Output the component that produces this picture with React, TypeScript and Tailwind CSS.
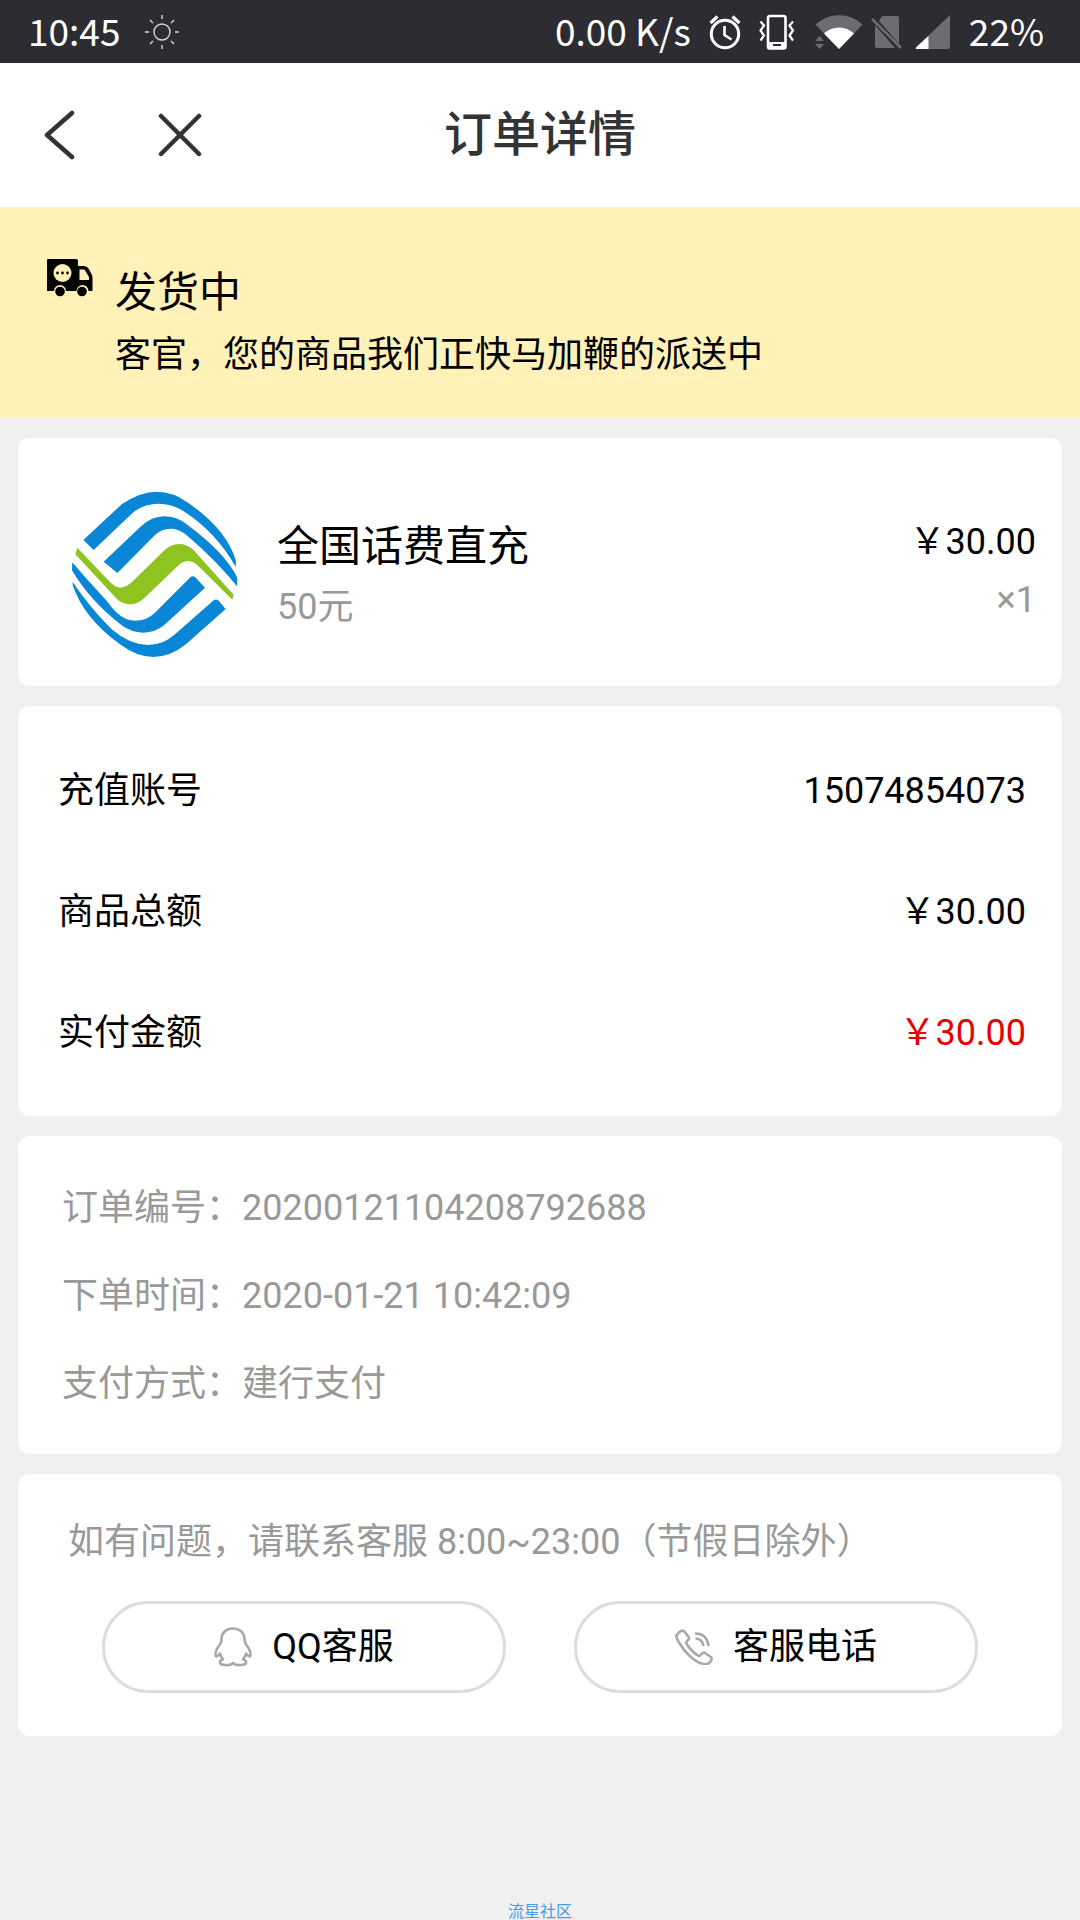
import type { ReactNode } from 'react';

const amounts = [
  { label: '充值账号', value: '15074854073', className: '' },
  { label: '商品总额', value: '￥30.00', className: '' },
  { label: '实付金额', value: '￥30.00', className: 'text-[#e60000]' },
];

const orderInfo = [
  { label: '订单编号', value: '20200121104208792688' },
  { label: '下单时间', value: '2020-01-21 10:42:09' },
  { label: '支付方式', value: '建行支付' },
];

function Card({ className, children }: { className: string; children: ReactNode }) {
  return <section className={`rounded-xl bg-white ${className}`}>{children}</section>;
}

function SunIcon() {
  return (
    <svg width="36" height="36" viewBox="0 0 36 36" fill="none" stroke="#d8d8da" strokeWidth="1.4">
      <circle cx="18" cy="18" r="8" />
      <path d="M18 1v4M18 31v4M1 18h4M31 18h4M6 6l3 3M27 27l3 3M6 30l3-3M27 9l3-3" />
    </svg>
  );
}

function AlarmIcon() {
  return (
    <svg width="32" height="36" viewBox="0 0 32 36" fill="none" stroke="#fff" strokeWidth="3">
      <circle cx="16" cy="20" r="13.7" />
      <path d="M15.5 12v9l7 4.500" strokeWidth="2.600" />
      <path d="M1.500 9l7-6.500M30.500 9l-7-6.500" strokeWidth="3.200" />
    </svg>
  );
}

function VibrateIcon() {
  return (
    <svg width="36" height="36" viewBox="0 0 36 36" fill="none" stroke="#fff">
      <rect x="9" y="2" width="17.500" height="32.500" rx="2" strokeWidth="2.600" />
      <path d="M9 28.500h17.500v6H9z" fill="#fff" strokeWidth="1" />
      <path d="M14 31h8" stroke="#2d2c32" strokeWidth="2" />
      <path d="M1.500 7.500l3.500 4-3.500 5 3.500 5-3.500 5M34 7.500l-3.500 4 3.500 5-3.500 5 3.500 5" strokeWidth="2.200" />
    </svg>
  );
}

function WifiIcon() {
  return (
    <svg width="48" height="36" viewBox="0 0 48 36">
      <path d="M24 35L0.500 10.500C14-2 34-2 47.500 10.500z" fill="#6d6c71" />
      <path d="M24 35L9 19.500c8-8 22-8 30 0z" fill="#fff" />
      <path d="M0 27l4.500-5 4.500 5zM0 30h9l-4.500 5z" fill="#6d6c71" />
    </svg>
  );
}

function NoSimIcon() {
  return (
    <svg width="32" height="36" viewBox="0 0 32 36">
      <path d="M11 2h15q2 0 2 2v26L8 7z" fill="#6d6c71" />
      <path d="M4 11l20 23H6q-2 0-2-2z" fill="#6d6c71" />
      <path d="M1 5l29 29" stroke="#6d6c71" strokeWidth="2.500" />
    </svg>
  );
}

function SignalIcon() {
  return (
    <svg width="36" height="36" viewBox="0 0 36 36">
      <path d="M35 1v32q0 2-2 2H2q-2 0-1-1.500z" fill="#6d6c71" />
      <path d="M13.500 22v13H2q-2 0-1-1.500z" fill="#fff" />
    </svg>
  );
}

function TruckIcon() {
  return (
    <svg width="46" height="38" viewBox="0 0 46 38">
      <path d="M1 0h28q2 0 2 2v5h6q3 0 4.500 2.500l3 5.500q1 2 1 4v13h-4a6 6 0 0 0-12 0H19a6 6 0 0 0-12 0H0V1q0-1 1-1z" fill="#050300" />
      <path d="M32.500 10.500h5l4.500 7.500v3h-9.500z" fill="#fff1b8" />
      <circle cx="15.500" cy="14" r="9" fill="#fff1b8" />
      <circle cx="10.500" cy="14" r="1.400" />
      <circle cx="15.500" cy="14" r="1.400" />
      <circle cx="20.500" cy="14" r="1.400" />
      <circle cx="13" cy="32.500" r="4.800" />
      <circle cx="35" cy="32.500" r="4.800" />
    </svg>
  );
}

function MobileLogo() {
  return (
    <svg width="168" height="168" viewBox="93 90 504 504" className="shrink-0" role="img" aria-label="中国移动">
      <g fill="#0a86d6">
        <path d="M130 237L245 130Q300 92 350 92Q400 92 445 126Q560 205 588 300L587 318Q530 215 430 150Q395 128 355 128Q310 128 275 158L161 267Z" />
        <path d="M191 302L303 196Q335 166 373 166Q410 166 440 190Q555 275 592 350L591 376Q530 300 437 220Q415 203 393 203Q365 203 345 222L232 336Z" />
        <path d="M97 304Q140 355 205 425Q240 477 285 479Q320 479 345 455L451 349Q458 342 466 349L495 380L372 493Q345 515 310 515Q275 515 245 493Q150 420 96 328Z" />
        <path d="M98 363Q150 440 215 505Q270 552 325 552Q370 552 405 520L521 418Q528 412 536 419L557 444L438 550Q390 588 340 588Q290 588 240 550Q130 470 98 372Z" />
      </g>
      <path d="M112 260Q150 300 213 366Q228 380 242 380Q260 378 275 364L371 270Q392 249 417 249Q440 249 460 266L581 401L577 416L478 318Q462 300 444 300Q426 301 411 317L309 415Q290 431 269 430Q245 428 230 413L106 280Z" fill="#8fc31f" />
    </svg>
  );
}

function QqIcon() {
  return (
    <svg width="38" height="40" viewBox="0 0 38 40" fill="none" stroke="#a8a8a8" strokeWidth="2.600" strokeLinejoin="round">
      <path d="M19 1.500C11 1.500 7.500 7 7.500 12Q7.500 15 6 17.500C3 21 1.500 25 1.500 28Q2 31.500 6 26.500Q6.500 30 9 32.500C4 33.500 5 38 11 38Q17 38.500 19 36Q21 38.500 27 38C33 38 34 33.500 29 32.500Q31.500 30 32 26.500Q36 31.500 36.500 28C36.500 25 35 21 32 17.500Q30.500 15 30.500 12C30.500 7 27 1.500 19 1.500Z" />
    </svg>
  );
}

function CallIcon() {
  return (
    <svg width="38" height="36" viewBox="0 0 38 36" fill="none" stroke="#a8a8a8" strokeWidth="2.600" strokeLinejoin="round">
      <path d="M28 35C19 33 9 22 5 15Q1 9 1.500 6.500Q4 2.500 7 1.500Q9 1.500 10.500 4L14 8.500Q14.500 10 12.500 11.500Q10.500 13 12 15.500Q17 23 23 26.500Q25 27.500 26.500 25Q28 23 30 24L36 28Q37.500 30 35.500 32.500Q33 36 28 35Z" />
      <path d="M20 4.500Q32 4.500 33.500 17M20.500 9.500Q27.500 10 28.500 17" />
    </svg>
  );
}

export default function App() {
  return (
    <div className="flex min-h-screen flex-col bg-[#f0f0f0] font-['Roboto','Noto_Sans_CJK_SC',sans-serif] text-4xl text-black">
      {/* Status bar */}
      <div className="flex h-[63px] items-center justify-between bg-[#2d2c32] pr-9 pl-7 font-['Noto_Sans_CJK_SC',sans-serif] text-[37px] text-white">
        <div className="flex items-center gap-6">
          <span className="pb-1 leading-[58px]">10:45</span>
          <SunIcon />
        </div>
        <div className="flex items-center">
          <span className="mr-[18px] pb-1 leading-[58px]">0.00 K/s</span>
          <span className="mr-[18px]"><AlarmIcon /></span>
          <span className="mr-5"><VibrateIcon /></span>
          <span className="mr-2"><WifiIcon /></span>
          <span className="mr-3"><NoSimIcon /></span>
          <span className="mr-[18px]"><SignalIcon /></span>
          <span className="pb-1 leading-[58px]">22%</span>
        </div>
      </div>

      {/* Nav bar */}
      <header className="grid h-36 grid-cols-[1fr_auto_1fr] items-center bg-white px-9">
        <div className="flex items-center gap-[74px] text-[#333]">
          <button type="button" aria-label="返回" className="p-2">
            <svg width="32" height="50" viewBox="0 0 32 50" fill="none" stroke="currentColor" strokeWidth="4.500" strokeLinecap="round" strokeLinejoin="round">
              <path d="M28 3L3 25l25 22" />
            </svg>
          </button>
          <button type="button" aria-label="关闭">
            <svg width="44" height="44" viewBox="0 0 44 44" fill="none" stroke="currentColor" strokeWidth="4.500" strokeLinecap="round">
              <path d="M3 3l38 38M41 3L3 41" />
            </svg>
          </button>
        </div>
        <h1 className="text-5xl font-medium text-[#333]">订单详情</h1>
      </header>

      {/* Shipping state */}
      <div className="flex gap-[22px] bg-[#fff1b8] pt-[52px] pr-6 pb-8 pl-[47px]">
        <TruckIcon />
        <div className="pt-0.5">
          <h2 className="text-[42px] leading-[64px]">发货中</h2>
          <p className="leading-[60px]">客官，您的商品我们正快马加鞭的派送中</p>
        </div>
      </div>

      <main className="flex flex-col gap-5 px-[18px] pt-[21px]">
        <Card className="flex items-center pt-[53px] pr-[26px] pb-[27px] pl-[53px]">
          <MobileLogo />
          <div className="ml-[38px] flex-1">
            <h3 className="text-[42px] leading-[64px]">全国话费直充</h3>
            <p className="leading-[56px] text-[#999]">50元</p>
          </div>
          <div className="pb-2 text-right">
            <p className="leading-[58px]">￥30.00</p>
            <p className="leading-[58px] text-[#999]">×1</p>
          </div>
        </Card>

        <Card className="pt-6 pr-9 pb-[23px] pl-10">
          {amounts.map(row => (
            <div key={row.label} className="flex h-[121px] items-center justify-between">
              <span>{row.label}</span>
              <span className={row.className}>{row.value}</span>
            </div>
          ))}
        </Card>

        <Card className="px-11 pt-7 pb-[26px] text-[#999]">
          {orderInfo.map(row => (
            <p key={row.label} className="leading-[88px]">{row.label}：{row.value}</p>
          ))}
        </Card>

        <Card className="px-[50px] pt-[38px] pb-[43px]">
          <p className="leading-[60px] text-[#999]">如有问题，请联系客服 8:00~23:00（节假日除外）</p>
          <div className="mt-[29px] grid grid-cols-2 gap-[68px] px-[34px]">
            <button type="button" className="flex h-[92px] items-center justify-center gap-5 rounded-full border-3 border-[#ddd]">
              <QqIcon />
              QQ客服
            </button>
            <button type="button" className="flex h-[92px] items-center justify-center gap-5 rounded-full border-3 border-[#ddd]">
              <CallIcon />
              客服电话
            </button>
          </div>
        </Card>
      </main>

      <footer className="mt-auto text-center font-['Noto_Sans_CJK_SC',sans-serif] text-base leading-5 text-[#4a9ae6]">流星社区</footer>
    </div>
  );
}
